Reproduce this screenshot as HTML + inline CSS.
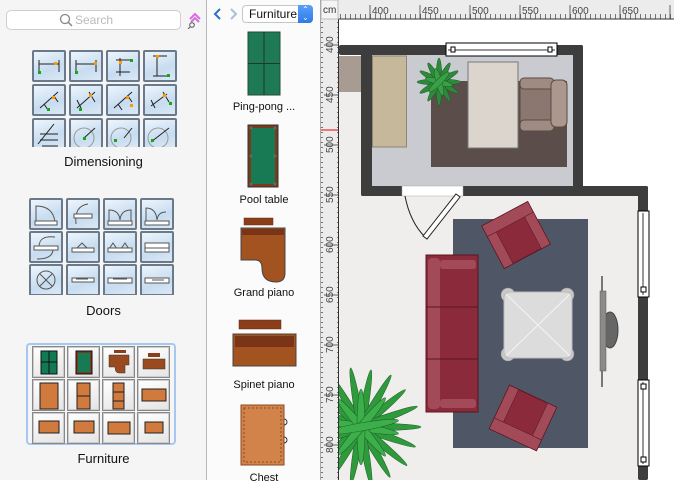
<!DOCTYPE html>
<html><head><meta charset="utf-8"><style>
*{margin:0;padding:0;box-sizing:border-box}
body{width:674px;height:480px;overflow:hidden;position:relative;background:#fff;font-family:"Liberation Sans",sans-serif}
.abs{position:absolute}
#left{left:0;top:0;width:207px;height:480px;background:#f5f5f5;border-right:1px solid #b8b8b8}
#mid{left:207px;top:0;width:114px;height:480px;background:#fbfbfb;border-right:1px solid #a8a8a8}
.lbl{position:absolute;font-size:13px;color:#111;text-align:center}
.grid{position:absolute;display:grid;gap:1px}
.cell{width:34px;height:32px;border:2px solid #6b7a8a;border-radius:2px;background:linear-gradient(160deg,#eef5fc,#c7dcf0 60%,#dbe8f5);position:relative}
.fcell{width:33px;height:32px;border:1px solid #888;background:linear-gradient(160deg,#fff,#e4e4e4);box-shadow:inset 0 0 0 1px #ccc;position:relative}
.cell svg,.fcell svg{position:absolute;left:0;top:0}
.mlbl{position:absolute;left:207px;width:114px;text-align:center;font-size:11px;color:#111}
</style></head><body>

<svg class="abs" style="left:0;top:0" width="674" height="480">
<defs>
<pattern id="tt" x="338" y="0" width="5" height="19" patternUnits="userSpaceOnUse"><line x1="2.5" y1="14" x2="2.5" y2="19" stroke="#555" stroke-width="0.8"/></pattern>
<pattern id="tl" x="0" y="0" width="19" height="5" patternUnits="userSpaceOnUse"><line x1="14" y1="2.5" x2="19" y2="2.5" stroke="#555" stroke-width="0.8"/></pattern>
<radialGradient id="lf" cx="0.5" cy="0.5" r="0.6"><stop offset="0" stop-color="#3fa14c"/><stop offset="1" stop-color="#1f6f2b"/></radialGradient>
</defs>
<!-- canvas -->
<rect x="339" y="19" width="335" height="461" fill="#fff"/>
<rect x="339" y="56" width="22" height="424" fill="#efeeec"/>
<rect x="339" y="186" width="309" height="294" fill="#efeeec"/>
<rect x="339" y="56" width="22" height="36" fill="#a89c92"/>
<rect x="372" y="55" width="201" height="131" fill="#c9cbd0"/>
<g fill="#3d3d3d">
<rect x="339" y="45" width="244" height="10" rx="2"/>
<rect x="361" y="45" width="11" height="151" rx="2"/>
<rect x="573" y="45" width="10" height="151" rx="2"/>
<rect x="361" y="186" width="287" height="10" rx="2"/>
<rect x="638" y="186" width="10" height="294" rx="2"/>
</g>
<rect x="446" y="43" width="111" height="13" fill="#fff" stroke="#000"/>
<line x1="448" y1="50" x2="555" y2="50" stroke="#333"/>
<rect x="451" y="47" width="4" height="5" fill="#fff" stroke="#000"/><rect x="548" y="47" width="4" height="5" fill="#fff" stroke="#000"/>
<rect x="402" y="186" width="61" height="10" fill="#fff" stroke="#aaa" stroke-width="0.5"/>
<path d="M405 196 Q410 222 425 237" fill="none" stroke="#222"/>
<polygon points="456,194 460,197 427,239 423,236" fill="#fff" stroke="#222"/>
<rect x="638" y="211" width="11" height="86" fill="#fff" stroke="#000"/>
<rect x="638" y="380" width="11" height="86" fill="#fff" stroke="#000"/>
<line x1="643" y1="213" x2="643" y2="295" stroke="#333"/><line x1="643" y1="382" x2="643" y2="464" stroke="#333"/>
<rect x="641" y="287" width="5" height="5" fill="#fff" stroke="#000"/>
<rect x="641" y="384" width="5" height="5" fill="#fff" stroke="#000"/><rect x="641" y="457" width="5" height="5" fill="#fff" stroke="#000"/>
<!-- top room furniture -->
<rect x="372.5" y="56" width="34" height="91" fill="#c5b89b" stroke="#8f8570"/>
<rect x="431" y="81" width="136" height="86" fill="#5a4d4a"/>
<rect x="468" y="62" width="50" height="86" fill="#dcd5cd" stroke="#777"/>
<rect x="520" y="85" width="36" height="42" fill="#8b7770" stroke="#5a4a44"/>
<rect x="520" y="78" width="34" height="11" rx="4" fill="#9e8b82" stroke="#5a4a44"/>
<rect x="520" y="120" width="34" height="11" rx="4" fill="#9e8b82" stroke="#5a4a44"/>
<rect x="551" y="80" width="16" height="47" rx="5" fill="#ab978e" stroke="#5a4a44"/>
<g transform="translate(439,82)" fill="#2d8a3a" stroke="#1c5a24" stroke-width="0.5">
<ellipse rx="22" ry="3" transform="rotate(0)"/><ellipse rx="22" ry="3" transform="rotate(30)"/><ellipse rx="22" ry="3" transform="rotate(60)"/><ellipse rx="24" ry="3" transform="rotate(90)"/><ellipse rx="22" ry="3" transform="rotate(120)"/><ellipse rx="22" ry="3" transform="rotate(150)"/>
<ellipse rx="14" ry="3" fill="#3aa048" transform="rotate(15)"/><ellipse rx="14" ry="3" fill="#3aa048" transform="rotate(75)"/><ellipse rx="14" ry="3" fill="#3aa048" transform="rotate(135)"/>
</g>
<!-- living room -->
<rect x="453" y="219" width="135" height="229" fill="#4f5665"/>
<g transform="translate(516,235) rotate(-28)">
<rect x="-26" y="-24" width="52" height="48" fill="#8b2a3a" stroke="#5a1520"/>
<rect x="-26" y="-24" width="52" height="12" fill="#a34a58" stroke="#5a1520" stroke-width="0.5"/>
<rect x="-26" y="-12" width="10" height="36" fill="#a34a58" stroke="#5a1520" stroke-width="0.5"/>
<rect x="16" y="-12" width="10" height="36" fill="#a34a58" stroke="#5a1520" stroke-width="0.5"/>
</g>
<g transform="translate(523,418) rotate(205)">
<rect x="-26" y="-24" width="52" height="48" fill="#8b2a3a" stroke="#5a1520"/>
<rect x="-26" y="-24" width="52" height="12" fill="#a34a58" stroke="#5a1520" stroke-width="0.5"/>
<rect x="-26" y="-12" width="10" height="36" fill="#a34a58" stroke="#5a1520" stroke-width="0.5"/>
<rect x="16" y="-12" width="10" height="36" fill="#a34a58" stroke="#5a1520" stroke-width="0.5"/>
</g>
<rect x="426" y="255" width="52" height="157" fill="#8b2a3a" stroke="#5a1520"/>
<rect x="428" y="258" width="12" height="151" rx="4" fill="#a34a58"/>
<rect x="440" y="260" width="36" height="9" rx="3" fill="#a34a58"/>
<rect x="440" y="399" width="36" height="9" rx="3" fill="#a34a58"/>
<line x1="426" y1="307" x2="478" y2="307" stroke="#5a1520"/><line x1="426" y1="359" x2="478" y2="359" stroke="#5a1520"/>
<g fill="#c8c8c8" stroke="#999" stroke-width="0.5"><circle cx="508" cy="295" r="7"/><circle cx="567" cy="295" r="7"/><circle cx="508" cy="354" r="7"/><circle cx="567" cy="354" r="7"/></g>
<rect x="504" y="292" width="68" height="66" rx="6" fill="#dcdcdc" stroke="#bbb"/>
<line x1="506" y1="294" x2="570" y2="356" stroke="#f4f4f4"/><line x1="570" y1="294" x2="506" y2="356" stroke="#f4f4f4"/>
<rect x="601" y="276" width="2" height="111" fill="#777"/>
<ellipse cx="610" cy="330" rx="8" ry="18" fill="#666" stroke="#444"/>
<rect x="600" y="291" width="6" height="80" fill="#8a8a8a" stroke="#555" stroke-width="0.5"/>
<g transform="translate(361,427)" fill="#2f9a3c" stroke="#1c5a24" stroke-width="0.5">
<ellipse rx="60" ry="4" transform="rotate(0)"/><ellipse rx="58" ry="4" transform="rotate(20)"/><ellipse rx="60" ry="4" transform="rotate(40)"/><ellipse rx="58" ry="4" transform="rotate(60)"/><ellipse rx="60" ry="4" transform="rotate(80)"/><ellipse rx="58" ry="4" transform="rotate(100)"/><ellipse rx="60" ry="4" transform="rotate(120)"/><ellipse rx="58" ry="4" transform="rotate(140)"/><ellipse rx="60" ry="4" transform="rotate(160)"/>
<ellipse rx="38" ry="4" fill="#3cae4a" transform="rotate(10)"/><ellipse rx="38" ry="4" fill="#3cae4a" transform="rotate(50)"/><ellipse rx="38" ry="4" fill="#3cae4a" transform="rotate(90)"/><ellipse rx="38" ry="4" fill="#3cae4a" transform="rotate(130)"/><ellipse rx="38" ry="4" fill="#3cae4a" transform="rotate(170)"/>
</g>
<rect x="321" y="0" width="18" height="480" fill="#ececec"/>
<!-- rulers -->
<rect x="338" y="0" width="336" height="19" fill="#ececec"/>
<rect x="338" y="0" width="336" height="19" fill="url(#tt)"/>
<rect x="321" y="19" width="18" height="461" fill="url(#tl)"/>
<line x1="338" y1="19" x2="674" y2="19" stroke="#333"/><line x1="338.5" y1="19" x2="338.5" y2="480" stroke="#333"/>
<g stroke="#444" stroke-width="0.8">
<line x1="370" y1="5" x2="370" y2="19"/><line x1="420" y1="5" x2="420" y2="19"/><line x1="470" y1="5" x2="470" y2="19"/><line x1="520" y1="5" x2="520" y2="19"/><line x1="570" y1="5" x2="570" y2="19"/><line x1="620" y1="5" x2="620" y2="19"/><line x1="670" y1="5" x2="670" y2="19"/>
<line x1="324" y1="45" x2="338" y2="45"/><line x1="324" y1="95" x2="338" y2="95"/><line x1="324" y1="145" x2="338" y2="145"/><line x1="324" y1="195" x2="338" y2="195"/><line x1="324" y1="245" x2="338" y2="245"/><line x1="324" y1="295" x2="338" y2="295"/><line x1="324" y1="345" x2="338" y2="345"/><line x1="324" y1="395" x2="338" y2="395"/><line x1="324" y1="445" x2="338" y2="445"/>
</g>
<g font-size="10" fill="#444" font-family="Liberation Sans">
<text x="372" y="14">400</text><text x="422" y="14">450</text><text x="472" y="14">500</text><text x="522" y="14">550</text><text x="572" y="14">600</text><text x="622" y="14">650</text>
<g transform="rotate(-90)"><text x="-53" y="333">400</text><text x="-103" y="333">450</text><text x="-153" y="333">500</text><text x="-203" y="333">550</text><text x="-253" y="333">600</text><text x="-303" y="333">650</text><text x="-353" y="333">700</text><text x="-403" y="333">750</text><text x="-453" y="333">800</text></g>
</g>
<line x1="321" y1="130" x2="338" y2="130" stroke="#e00"/>
<rect x="321" y="0" width="17" height="19" fill="#f4f4f4" stroke="#bbb"/>
<text x="323" y="13" font-size="10" fill="#333" font-family="Liberation Sans">cm</text>
</svg>

<div id="left" class="abs">
 <div class="abs" style="left:6px;top:10px;width:175px;height:20px;background:#fff;border:1px solid #cfcfcf;border-radius:5px"></div>
 <svg class="abs" style="left:59px;top:13px" width="14" height="14"><circle cx="6" cy="6" r="4.5" fill="none" stroke="#888" stroke-width="1.3"/><line x1="9.3" y1="9.3" x2="13" y2="13" stroke="#888" stroke-width="1.5"/></svg>
 <div class="abs" style="left:75px;top:13px;font-size:12px;color:#bbb">Search</div>
 <svg class="abs" style="left:187px;top:12px" width="16" height="17"><path d="M3 7 L8 2 L13 7 M4 10 L8 6 L12 10" fill="none" stroke="#d86de0" stroke-width="2"/><circle cx="5" cy="13" r="2.3" fill="none" stroke="#555"/><line x1="3" y1="15" x2="1" y2="17" stroke="#555"/></svg>

 <div class="grid" style="left:32px;top:50px;grid-template-columns:repeat(4,34px);gap:2px 3px;height:97px;overflow:hidden">
  <div class="cell"><svg width="30" height="28"><path d="M5 8v12M25 8v12M5 12h20" stroke="#222" fill="none"/><rect x="20" y="10" width="3" height="3" fill="#f90"/><rect x="4" y="19" width="3" height="3" fill="#1a1"/></svg></div>
  <div class="cell"><svg width="30" height="28"><path d="M5 8v12M25 8v12M5 12h20" stroke="#222" fill="none"/><rect x="23" y="10" width="3" height="3" fill="#f90"/><rect x="4" y="19" width="3" height="3" fill="#1a1"/></svg></div>
  <div class="cell"><svg width="30" height="28"><path d="M8 8h14M8 20h14M12 6v18" stroke="#222" fill="none"/><rect x="11" y="9" width="3" height="3" fill="#f90"/><rect x="22" y="7" width="3" height="3" fill="#1a1"/></svg></div>
  <div class="cell"><svg width="30" height="28"><path d="M8 4h14M8 24h14M12 4v20" stroke="#222" fill="none"/><rect x="11" y="3" width="3" height="3" fill="#f90"/><rect x="22" y="22" width="3" height="3" fill="#1a1"/></svg></div>
  <div class="cell"><svg width="30" height="28"><path d="M6 22L24 6M10 18l4 6M20 10l4 6" stroke="#222" fill="none"/><rect x="18" y="10" width="3" height="3" fill="#f90"/><rect x="13" y="22" width="3" height="3" fill="#1a1"/></svg></div>
  <div class="cell"><svg width="30" height="28"><path d="M6 22L24 6M6 14l4 8M18 6l6 10" stroke="#222" fill="none"/><rect x="18" y="8" width="3" height="3" fill="#f90"/><rect x="8" y="22" width="3" height="3" fill="#1a1"/></svg></div>
  <div class="cell"><svg width="30" height="28"><path d="M6 22L24 6M10 18l4 6M20 10l4 6" stroke="#222" fill="none"/><rect x="18" y="10" width="3" height="3" fill="#f90"/><rect x="22" y="18" width="3" height="3" fill="#f90"/></svg></div>
  <div class="cell"><svg width="30" height="28"><path d="M6 20L22 8M6 14l4 8M18 6l6 10" stroke="#222" fill="none"/><rect x="18" y="8" width="3" height="3" fill="#f90"/><rect x="24" y="16" width="3" height="3" fill="#1a1"/></svg></div>
  <div class="cell"><svg width="30" height="28"><path d="M4 24L20 4M6 14h18M6 20h18M8 26h16" stroke="#222" fill="none"/></svg></div>
  <div class="cell"><svg width="30" height="28"><circle cx="13" cy="18" r="10" fill="none" stroke="#999"/><path d="M13 18L24 8" stroke="#222"/><rect x="12" y="17" width="3" height="3" fill="#1a1"/></svg></div>
  <div class="cell"><svg width="30" height="28"><circle cx="13" cy="18" r="10" fill="none" stroke="#999"/><path d="M16 18L24 8" stroke="#222"/><rect x="6" y="19" width="3" height="3" fill="#1a1"/></svg></div>
  <div class="cell"><svg width="30" height="28"><circle cx="13" cy="18" r="10" fill="none" stroke="#999"/><path d="M6 22L24 8" stroke="#222"/><rect x="6" y="19" width="3" height="3" fill="#1a1"/></svg></div>
 </div>
 <div class="lbl" style="left:0;width:207px;top:154px">Dimensioning</div>

 <div class="grid" style="left:29px;top:198px;grid-template-columns:repeat(4,34px);gap:1px 3px;height:97px;overflow:hidden">
  <div class="cell"><svg width="30" height="28"><path d="M5 22V6Q22 6 24 22" fill="none" stroke="#555"/><rect x="4" y="21" width="22" height="4" fill="#fff" stroke="#555"/></svg></div>
  <div class="cell"><svg width="30" height="28"><path d="M20 4Q6 6 8 24M6 15h18" fill="none" stroke="#555"/><rect x="6" y="14" width="18" height="4" fill="#fff" stroke="#555"/></svg></div>
  <div class="cell"><svg width="30" height="28"><path d="M4 22V10Q14 10 15 20Q16 10 26 10V22" fill="none" stroke="#555"/><rect x="3" y="21" width="24" height="4" fill="#fff" stroke="#555"/></svg></div>
  <div class="cell"><svg width="30" height="28"><path d="M4 22V8Q14 8 15 20Q16 12 24 12" fill="none" stroke="#555"/><rect x="3" y="21" width="24" height="4" fill="#fff" stroke="#555"/></svg></div>
  <div class="cell"><svg width="30" height="28"><path d="M8 14Q8 2 24 4M22 16Q22 26 6 26" fill="none" stroke="#555"/><rect x="3" y="13" width="24" height="4" fill="#fff" stroke="#555"/></svg></div>
  <div class="cell"><svg width="30" height="28"><path d="M8 16L14 10L20 16" fill="none" stroke="#555"/><rect x="4" y="15" width="22" height="4" fill="#fff" stroke="#555"/></svg></div>
  <div class="cell"><svg width="30" height="28"><path d="M4 16L8 10L12 16M16 16L20 10L24 16" fill="none" stroke="#555"/><rect x="3" y="15" width="24" height="4" fill="#fff" stroke="#555"/></svg></div>
  <div class="cell"><svg width="30" height="28"><rect x="3" y="10" width="24" height="6" fill="#fff" stroke="#555"/><rect x="3" y="15" width="24" height="4" fill="#fff" stroke="#555"/></svg></div>
  <div class="cell"><svg width="30" height="28"><circle cx="15" cy="14" r="9" fill="none" stroke="#555"/><path d="M9 8L21 20M21 8L9 20" stroke="#555"/></svg></div>
  <div class="cell"><svg width="30" height="28"><rect x="4" y="12" width="22" height="4" fill="#fff" stroke="#555"/><path d="M8 13h12" stroke="#555"/></svg></div>
  <div class="cell"><svg width="30" height="28"><rect x="3" y="12" width="24" height="5" fill="#fff" stroke="#555"/><path d="M8 13h14" stroke="#555"/></svg></div>
  <div class="cell"><svg width="30" height="28"><rect x="3" y="12" width="24" height="5" fill="#fff" stroke="#555"/><path d="M10 14h12" stroke="#555"/></svg></div>
 </div>
 <div class="lbl" style="left:0;width:207px;top:303px">Doors</div>

 <div class="abs" style="left:26px;top:343px;width:150px;height:102px;border:2px solid #a6c8f0;border-radius:4px"></div>
 <div class="grid" style="left:32px;top:346px;grid-template-columns:repeat(4,33px);gap:1px 2px">
  <div class="fcell"><svg width="33" height="32"><rect x="8" y="4" width="16" height="23" fill="#117a55" stroke="#111"/><path d="M16 4v23M8 15h16" stroke="#111"/></svg></div>
  <div class="fcell"><svg width="33" height="32"><rect x="8" y="4" width="16" height="23" fill="#7a3b1a" stroke="#111"/><rect x="10" y="6" width="12" height="19" fill="#177a55"/></svg></div>
  <div class="fcell"><svg width="33" height="32"><rect x="11" y="3" width="12" height="3" fill="#8b3e1a"/><path d="M6 8h20v10h-4v8h-6q-4 0-4-6h-6z" fill="#9a4a1e" stroke="#333" stroke-width="0.5"/></svg></div>
  <div class="fcell"><svg width="33" height="32"><rect x="10" y="6" width="12" height="4" fill="#8b3e1a"/><rect x="5" y="12" width="22" height="10" fill="#9a4a1e" stroke="#333" stroke-width="0.5"/></svg></div>
  <div class="fcell"><svg width="33" height="32"><rect x="7" y="3" width="18" height="26" fill="#d07a3e" stroke="#222"/></svg></div>
  <div class="fcell"><svg width="33" height="32"><rect x="9" y="3" width="13" height="26" fill="#d07a3e" stroke="#222"/><path d="M9 16h13" stroke="#222"/></svg></div>
  <div class="fcell"><svg width="33" height="32"><rect x="10" y="3" width="11" height="26" fill="#d07a3e" stroke="#222"/><path d="M10 12h11M10 21h11" stroke="#222"/></svg></div>
  <div class="fcell"><svg width="33" height="32"><rect x="4" y="9" width="24" height="12" fill="#d07a3e" stroke="#222"/></svg></div>
  <div class="fcell"><svg width="33" height="32"><rect x="6" y="8" width="20" height="12" fill="#d07a3e" stroke="#222"/></svg></div>
  <div class="fcell"><svg width="33" height="32"><rect x="6" y="8" width="20" height="12" fill="#d07a3e" stroke="#222"/></svg></div>
  <div class="fcell"><svg width="33" height="32"><rect x="5" y="9" width="22" height="12" fill="#d07a3e" stroke="#222"/></svg></div>
  <div class="fcell"><svg width="33" height="32"><rect x="7" y="9" width="18" height="11" fill="#d07a3e" stroke="#222"/></svg></div>
 </div>
 <div class="lbl" style="left:0;width:207px;top:451px">Furniture</div>
</div>

<div id="mid" class="abs">
 <svg class="abs" style="left:4px;top:6px" width="30" height="16"><path d="M9 3L4 8L9 13" fill="none" stroke="#2f6fc6" stroke-width="2"/><path d="M20 3L25 8L20 13" fill="none" stroke="#a9bfd8" stroke-width="2"/></svg>
 <div class="abs" style="left:35px;top:5px;width:71px;height:18px;background:#fff;border:1px solid #c6c6c6;border-radius:4px;font-size:12px;padding:1px 0 0 6px;color:#111">Furniture</div>
 <div class="abs" style="left:91px;top:5px;width:15px;height:18px;background:linear-gradient(#5aa0f8,#2e7ae8);border-radius:0 4px 4px 0;color:#fff;font-size:8px;text-align:center;line-height:8px;padding-top:1px">&#8963;<br>&#8964;</div>
</div>
<svg class="abs" style="left:207px;top:28px" width="113" height="452">
 <rect x="41" y="4" width="32" height="63" fill="#1d7a55" stroke="#2a4a3a"/><path d="M57 4v63M41 35.5h32" stroke="#1a3a2a"/>
 <rect x="41" y="97" width="30" height="62" fill="#7a3b1a" stroke="#333"/><rect x="44" y="100" width="24" height="56" fill="#177a55"/>
 <g fill="#666"><circle cx="44" cy="100" r="1.5"/><circle cx="68" cy="100" r="1.5"/><circle cx="44" cy="128" r="1.5"/><circle cx="68" cy="128" r="1.5"/><circle cx="44" cy="156" r="1.5"/><circle cx="68" cy="156" r="1.5"/></g>
 <rect x="37" y="190" width="29" height="7" fill="#8b3e1a" stroke="#6a2a10" stroke-width="0.5"/>
 <path d="M34 200h44v45q0 9-9 9q-14 0-14-14q0-8-7-8h-14z" fill="#a3531f" stroke="#444"/>
 <rect x="35" y="201" width="42" height="6" fill="#7a3517"/>
 <rect x="32" y="292" width="42" height="9" fill="#8b3e1a" stroke="#6a2a10" stroke-width="0.5"/>
 <rect x="26" y="306" width="63" height="32" fill="#a3531f" stroke="#444"/>
 <rect x="28" y="308" width="59" height="11" fill="#7a3517"/>
 <rect x="34" y="377" width="43" height="60" fill="#d2834a" stroke="#8a4a20"/>
 <rect x="37" y="380" width="37" height="54" fill="none" stroke="#8a4a20" stroke-dasharray="2 2"/>
 <path d="M77 391a3 3 0 0 1 0 6M77 409a3 3 0 0 1 0 6" fill="none" stroke="#333"/>
</svg>
<div class="mlbl" style="top:101px">Ping-pong ...</div>
<div class="mlbl" style="top:194px">Pool table</div>
<div class="mlbl" style="top:287px">Grand piano</div>
<div class="mlbl" style="top:379px">Spinet piano</div>
<div class="mlbl" style="top:472px">Chest</div>
</body></html>
